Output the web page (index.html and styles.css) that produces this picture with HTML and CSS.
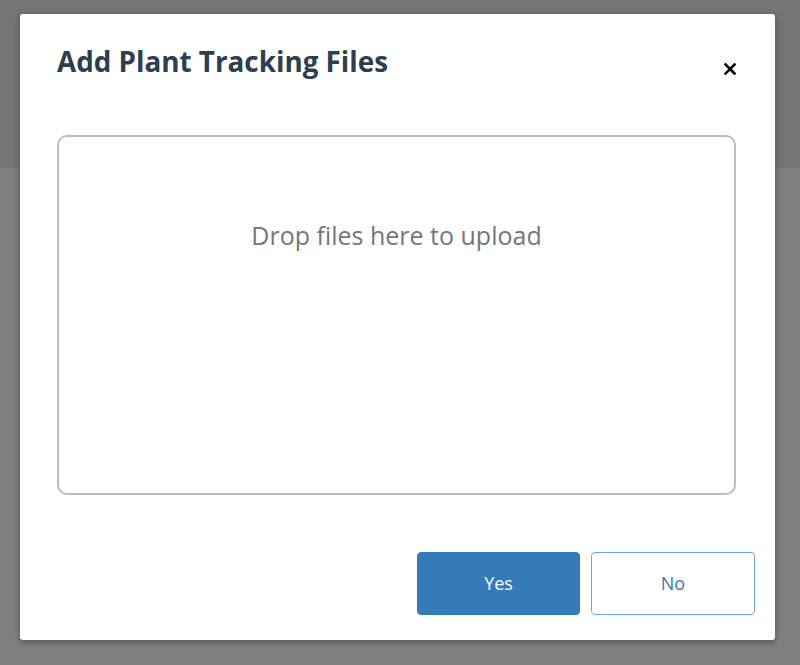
FILE: index.html
```html
<!DOCTYPE html>
<html>
<head>
<meta charset="utf-8">
<link rel="stylesheet" href="styles.css">
</head>
<body>
<div class="backdrop">
  <div class="modal">
    <div class="modal-header">
      <h1 class="modal-title">Add Plant Tracking Files</h1>
      <button class="close-btn" aria-label="Close">
        <svg width="12" height="12" viewBox="0 0 12 12"><path d="M1.5 1.5 L10.5 10.5 M10.5 1.5 L1.5 10.5" stroke="#000" stroke-width="2.6" stroke-linecap="square"/></svg>
      </button>
    </div>
    <div class="modal-body">
      <div class="dropzone">Drop files here to upload</div>
    </div>
    <div class="modal-footer">
      <button class="btn btn-primary">Yes</button>
      <button class="btn btn-outline">No</button>
    </div>
  </div>
</div>
</body>
</html>
```
FILE: styles.css
```css
html, body {
  margin: 0;
  padding: 0;
  height: 100%;
}
body {
  font-family: "Open Sans", "Liberation Sans", sans-serif;
  background: linear-gradient(to bottom, #757575 0, #757575 168px, #7f7f7f 168px, #7f7f7f 100%);
}
.backdrop {
  padding: 14px 25px 0 20px;
}
.modal {
  background: #fff;
  height: 626px;
  border-radius: 3px;
  box-shadow: 0 2px 6px rgba(0,0,0,0.35);
  display: flex;
  flex-direction: column;
}
.modal-header {
  height: 121px;
  box-sizing: border-box;
  padding: 27px 38px 0 37px;
  display: flex;
  justify-content: space-between;
  align-items: flex-start;
}
.modal-title {
  margin: 0;
  font-size: 27.8px;
  line-height: 40px;
  font-weight: 700;
  color: #2c3e50;
}
.close-btn {
  border: 0;
  background: none;
  padding: 0;
  margin-top: 21px;
  width: 14px;
  height: 14px;
  display: flex;
  align-items: center;
  justify-content: center;
  cursor: pointer;
}
.modal-body {
  padding: 0 39px 0 37px;
}
.dropzone {
  height: 360px;
  box-sizing: border-box;
  border: 2px solid #bdbdbd;
  border-radius: 10px;
  text-align: center;
  padding-top: 81px;
  font-size: 25px;
  line-height: 34px;
  color: #767676;
}
.modal-footer {
  display: flex;
  justify-content: flex-end;
  gap: 11px;
  padding: 57px 20px 0 0;
}
.btn {
  width: 164px;
  height: 63px;
  padding: 0 0 2px;
  border-radius: 4px;
  font-family: "Open Sans", "Liberation Sans", sans-serif;
  font-size: 18px;
  cursor: pointer;
}
.btn-primary {
  width: 163px;
  background: #337ab7;
  border: 1px solid #337ab7;
  color: #fff;
}
.btn-outline {
  background: #fff;
  border: 1px solid #6fa6dc;
  color: #337ab7;
}
```
